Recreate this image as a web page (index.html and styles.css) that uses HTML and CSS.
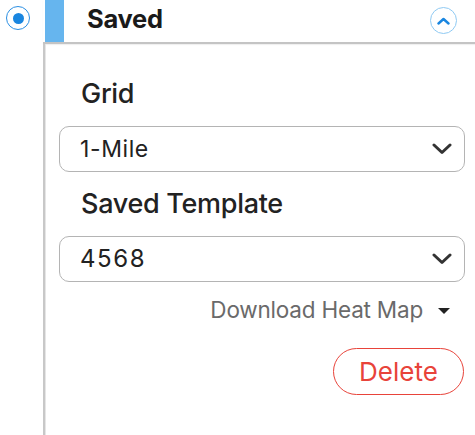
FILE: index.html
```html
<!DOCTYPE html>
<html>
<head>
<meta charset="utf-8">
<link rel="stylesheet" href="styles.css">
</head>
<body>
<div class="layout">
  <div class="rail">
    <span class="radio"><span class="radio-dot"></span></span>
  </div>
  <div class="panel">
    <div class="panel-header">
      <span class="accent"></span>
      <h2 class="title">Saved</h2>
      <button class="collapse" aria-label="Collapse">
        <svg width="13" height="8" viewBox="0 0 13 8"><path d="M1.5 6.5 L6.5 2 L11.5 6.5" fill="none" stroke="#1a86e0" stroke-width="2.4" stroke-linecap="round" stroke-linejoin="round"/></svg>
      </button>
    </div>
    <div class="panel-body">
      <div class="label">Grid</div>
      <div class="select">
        <span class="select-value">1-Mile</span>
        <svg class="chev" width="20" height="12" viewBox="0 0 20 12"><path d="M2 2 L10 9.5 L18 2" fill="none" stroke="#333" stroke-width="3" stroke-linecap="round" stroke-linejoin="round"/></svg>
      </div>
      <div class="label">Saved Template</div>
      <div class="select">
        <span class="select-value num">4568</span>
        <svg class="chev" width="20" height="12" viewBox="0 0 20 12"><path d="M2 2 L10 9.5 L18 2" fill="none" stroke="#333" stroke-width="3" stroke-linecap="round" stroke-linejoin="round"/></svg>
      </div>
      <div class="download">
        <span class="download-text">Download Heat Map</span>
        <span class="caret"></span>
      </div>
      <button class="delete">Delete</button>
    </div>
  </div>
</div>
</body>
</html>
```
FILE: styles.css
```css
* { box-sizing: border-box; }
html, body { margin: 0; padding: 0; background: #fff; }
body { font-family: Inter, "Liberation Sans", Arial, sans-serif; color: #222; }

.layout { display: flex; height: 100vh; }

.rail { width: 43px; flex: none; padding: 6px 0 0 6px; }
.radio {
  width: 24px; height: 24px; border-radius: 50%;
  border: 1.5px solid #2b8fe3;
  display: flex; align-items: center; justify-content: center;
}
.radio-dot { width: 11px; height: 11px; border-radius: 50%; background: #1a86e0; }

.panel { flex: 1; display: flex; flex-direction: column; }

.panel-header {
  height: 44px; flex: none;
  display: flex; align-items: flex-start;
  padding-left: 2px;
  border-bottom: 2px solid #c4c4c4;
  box-shadow: 0 1px 1px rgba(0,0,0,0.06);
}
.accent { width: 19px; height: 42px; background: #66b5ee; flex: none; }
.title {
  margin: 0 0 0 23px;
  font-size: 25.5px; font-weight: 700; line-height: 38px;
  color: #1a1a1a; letter-spacing: -0.3px;
}
.collapse {
  margin: 7px 18px 0 auto; padding: 0;
  width: 27px; height: 27px; border-radius: 50%;
  border: 1px solid #8fcaf3; background: #fff;
  display: flex; align-items: center; justify-content: center;
}

.panel-body {
  flex: 1;
  border-left: 2px solid #c8c8c8;
  box-shadow: inset 1px 0 0 #e6e6e6;
  padding: 0 10px 0 14px;
  display: flex; flex-direction: column;
}
.label {
  margin-top: 34px; padding-left: 22px;
  font-size: 27px; font-weight: 500; line-height: 32px; color: #222;
  letter-spacing: -0.3px;
}
.label + .select { margin-top: 16px; }
.select + .label { margin-top: 16px; }
.select {
  height: 46px;
  border: 1px solid #b4b4b4; border-radius: 10px;
  display: flex; align-items: center; justify-content: space-between;
  padding: 0 12px 0 20px;
}
.select-value { font-size: 23px; line-height: 28px; color: #222; letter-spacing: 0.6px; }
.select-value.num { font-size: 24px; letter-spacing: 1.6px; }
.chev { display: block; }

.download {
  margin-top: 15px;
  display: flex; align-items: center; justify-content: flex-end;
  padding-right: 15px;
}
.download-text {
  font-size: 22.5px; line-height: 26px; color: #6a6a6a;
  letter-spacing: -0.2px;
}
.caret {
  margin-left: 15px; margin-top: 2px;
  width: 0; height: 0;
  border-left: 6.5px solid transparent;
  border-right: 6.5px solid transparent;
  border-top: 6px solid #222;
}

.delete {
  align-self: flex-end;
  margin-top: 25px; margin-right: 1px;
  width: 131px; height: 47px;
  border: 1.5px solid #e8433a; border-radius: 24px;
  background: #fff; color: #e8433a;
  font-family: inherit; font-size: 26px; line-height: 30px;
  padding: 0;
}
```
